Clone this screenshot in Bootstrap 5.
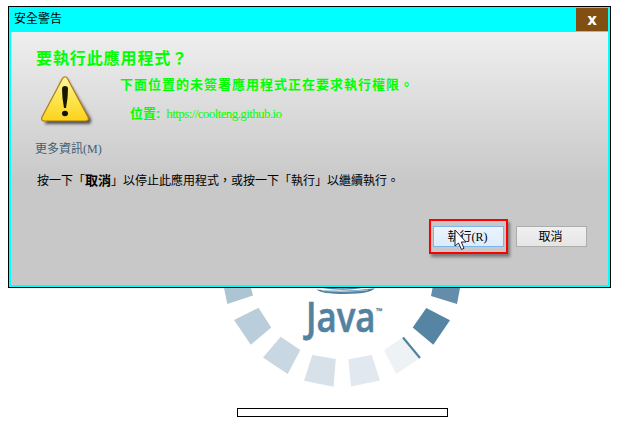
<!DOCTYPE html>
<html lang="zh-Hant">
<head>
<meta charset="utf-8">
<meta name="viewport" content="width=device-width, initial-scale=1">
<title>安全警告</title>
<link rel="stylesheet" href="https://cdn.jsdelivr.net/npm/bootstrap@5.3.0/dist/css/bootstrap.min.css">
<style>
body { width: 628px; height: 431px; padding: 6px 0 0 8px; background: #fff; color: #000;
  font: 12px/16px "Liberation Sans", "Noto Sans CJK TC", sans-serif; }
.dialog { width: 603px; height: 282px; border: 1px solid #000; background: #0ff; padding: 0 2px 2px; }
.titlebar { height: 25px; padding-left: 3px; }
.close-btn { width: 32px; height: 23px; margin-top: 1px; background: #804f11; color: #fff; border: 0; padding: 0; font: bold 15px/20px "DejaVu Sans", sans-serif; }
.pane { height: 253px; background: linear-gradient(#efefef, #c8c8c8 150px); }
.green { color: #0f0; font-weight: 700; }
.heading { height: 20px; margin: 15px 0 2px 25px; font: 700 16px/20px "Noto Sans CJK TC", sans-serif; letter-spacing: .9px; color: #0f0; }
.warn-row { height: 57px; padding-left: 26px; }
.warn-icon { margin-top: 5px; margin-right: 23px; }
.question { margin-top: 8px; font-size: 13px; letter-spacing: 1px; }
.place { margin: 13px 0 0 10px; font-size: 13px; }
.url { font: 400 13px/16px "Liberation Serif", serif; margin-left: 6px; letter-spacing: -.6px; }
.serif-latin { font-family: "Liberation Serif", "Noto Sans CJK TC", serif; }
.more { margin: 15px 0 0 24px; color: #3f6076; }
.hint { margin: 16px 0 0 26px; }
.hint b { font-size: 13px; }
.actions { margin: 30px 21px 0 0; gap: 8px; }
.focus-frame { width: 79px; height: 35px; border: 2px solid #f00; padding: 5px 2px; box-shadow: 2px 3px 3px rgba(0,0,0,.4); }
.dlg-btn { width: 71px; height: 21px; padding: 0 2px 0 0; border: 1px solid #adadad; border-radius: 0; background: linear-gradient(#f0f0f0, #e5e5e5); font-size: 12px; line-height: 18px; color: #000; }
.dlg-btn.active-btn { border-color: #7eb4ea; background: linear-gradient(#ecf4fc, #dcecfc); }
.pointer { left: 20px; top: 3px; }
.java { margin-left: 192px; }
.java text { font-family: "Open Sans", "Noto Sans", sans-serif; fill: #5382a1; }
.progress-box { width: 211px; height: 9px; margin: 8px 0 0 229px; border: 1px solid #000; }
</style>
</head>
<body class="overflow-hidden">
<main class="dialog">
  <header class="titlebar d-flex justify-content-between">
    <span class="pt-1 text-nowrap">安全警告</span>
    <button class="close-btn" type="button" aria-label="Close">x</button>
  </header>
  <section class="pane d-flex flex-column text-nowrap">
    <h1 class="heading">要執行此應用程式？</h1>
    <div class="warn-row d-flex">
      <svg class="warn-icon flex-shrink-0" width="60" height="54" viewBox="0 0 60 54">
        <defs>
          <linearGradient id="gold" x2="0" y2="1"><stop stop-color="#fff6a0"/><stop offset=".5" stop-color="#fbe650"/><stop offset="1" stop-color="#fdd21b"/></linearGradient>
          <filter id="soft" x="-20%" y="-20%" width="150%" height="150%"><feGaussianBlur stdDeviation="1.8"/></filter>
        </defs>
        <path d="M30 5L54 45Q55 50 51 50H9Q7 50 9 46L25 7Q28 3 30 5Z" fill="#222" opacity=".75" filter="url(#soft)"/>
        <path d="M25.500 4.500Q28 1 30.500 4.500L51 43Q52.500 47 48.500 47H7.500Q3.500 47 5 43Z" fill="url(#gold)" stroke="#b27a12" stroke-width="1.2"/>
        <path d="M25 15Q25 12 28 12Q31 12 31 15Q31 24 29 34H27Q25 24 25 15Z" fill="#181800"/>
        <ellipse cx="28" cy="39.500" rx="3" ry="2.700" fill="#111"/>
      </svg>
      <div>
        <div class="question green">下面位置的未簽署應用程式正在要求執行權限。</div>
        <div class="place d-flex"><span class="green">位置:</span><span class="url green fw-normal">https://coolteng.github.io</span></div>
      </div>
    </div>
    <div class="more serif-latin">更多資訊(M)</div>
    <div class="hint">按一下「<b>取消</b>」以停止此應用程式，或按一下「執行」以繼續執行。</div>
    <div class="actions d-flex justify-content-end align-items-center">
      <div class="focus-frame position-relative">
        <button class="btn dlg-btn active-btn serif-latin d-block" type="button">執行(R)</button>
        <svg class="pointer position-absolute" width="20" height="28" viewBox="0 0 20 28">
          <path d="M4 6V22L7.500 19L10.500 25.500L13 24.300L10.300 18H15Z" fill="#fff" stroke="#223" stroke-width="1"/>
        </svg>
      </div>
      <button class="btn dlg-btn" type="button">取消</button>
    </div>
  </section>
</main>
<svg class="java d-block" width="284" height="112" viewBox="200 288 284 112">
  <path d="M224 288H251L253 295.500L227.300 304Z" fill="#adc4d3"/>
  <path d="M234 320L258.500 307.700L271.200 327.500L250.800 344.700Z" fill="#bacdda"/>
  <path d="M263 357.500L280.700 336.700L300.300 350L287.700 374Z" fill="#c8d7e1"/>
  <path d="M304 380.700L312.300 355L335.800 359L333.500 386.700Z" fill="#d7e1e9"/>
  <path d="M348.300 359.300L371.700 355L380 380.500L351 386.500Z" fill="#e1e8ef"/>
  <path d="M384 350L403 337.300L420 358L396.300 374Z" fill="#edf2f5"/>
  <path d="M403 337.500L420 358" stroke="#5382a1" stroke-width="2.200"/>
  <path d="M412.700 327.500L426.300 308L450 320.300L433.300 344.700Z" fill="#5685a4"/>
  <path d="M431 296L432.500 288H460L457 304Z" fill="#638dab"/>
  <path d="M320 287Q343 291 364 287" fill="none" stroke="#5382a1" stroke-width="1.500"/>
  <path d="M316.500 289.500Q345 292.500 375 288.300Q370 294 345 294Q321 294 316.500 289.500Z" fill="#5382a1"/>
  <path d="M322 290.600Q345 293 368 290" fill="none" stroke="#c4d5e1" stroke-width=".8"/>
  <text x="306" y="332" font-size="42" font-weight="600" textLength="69.500" lengthAdjust="spacingAndGlyphs" stroke="#5382a1" stroke-width=".6">Java</text>
  <text x="376" y="314" font-size="8" font-weight="700" textLength="6.500" lengthAdjust="spacingAndGlyphs" stroke="#5382a1" stroke-width=".2">™</text>
</svg>
<div class="progress-box"></div>
<script src="https://cdn.jsdelivr.net/npm/bootstrap@5.3.0/dist/js/bootstrap.bundle.min.js"></script>
</body>
</html>
